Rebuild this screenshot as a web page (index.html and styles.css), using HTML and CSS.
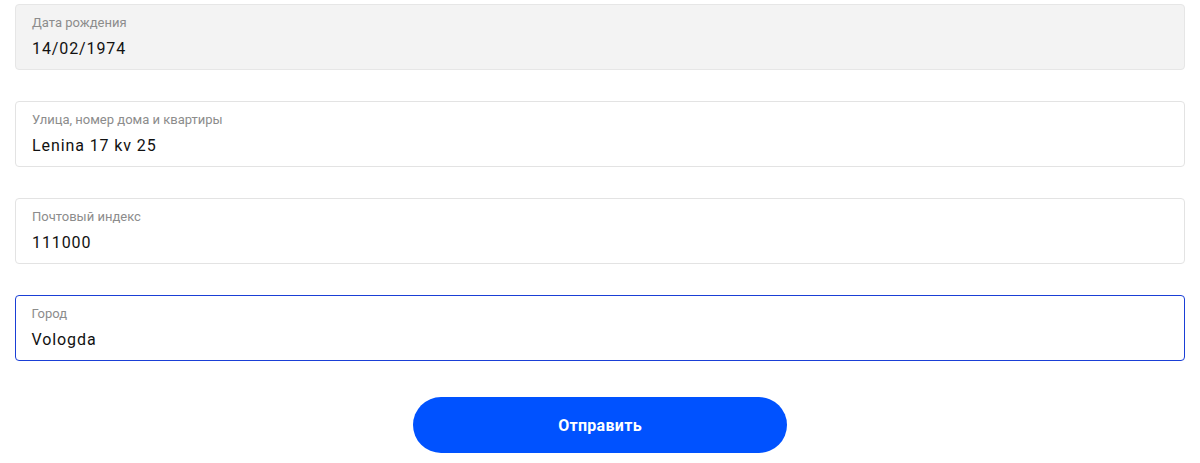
FILE: index.html
```html
<!DOCTYPE html>
<html lang="ru">
<head>
<meta charset="utf-8">
<link rel="stylesheet" href="styles.css">
</head>
<body>
<form class="form">
  <div class="field field-disabled">
    <span class="label">Дата рождения</span>
    <span class="value">14/02/1974</span>
  </div>
  <div class="field">
    <span class="label">Улица, номер дома и квартиры</span>
    <span class="value">Lenina 17 kv 25</span>
  </div>
  <div class="field">
    <span class="label">Почтовый индекс</span>
    <span class="value">111000</span>
  </div>
  <div class="field field-focus">
    <span class="label">Город</span>
    <span class="value">Vologda</span>
  </div>
  <div class="actions">
    <button type="button" class="submit">Отправить</button>
  </div>
</form>
</body>
</html>
```

FILE: styles.css
```css
html, body {
  margin: 0;
  padding: 0;
  background: #ffffff;
}
body {
  font-family: Roboto, "Noto Sans", Arial, sans-serif;
  color: #111;
}
.form {
  display: flex;
  flex-direction: column;
  gap: 31px;
  padding: 4px 15px 0 15px;
}
.field {
  box-sizing: border-box;
  height: 66px;
  border: 1px solid #e3e3e3;
  border-radius: 4px;
  background: #fff;
  padding: 11px 16px 0 16px;
  display: flex;
  flex-direction: column;
}
.field-disabled {
  background: #f3f3f3;
  border-color: #e6e6e6;
}
.field-focus {
  border: 1.5px solid #1a3fd6;
  padding: 10.5px 15.5px 0 15.5px;
}
.label {
  font-size: 13px;
  line-height: 14px;
  color: #8c8c8c;
}
.value {
  font-size: 16px;
  line-height: 20px;
  margin-top: 9px;
  color: #111;
  letter-spacing: 0.9px;
}
.actions {
  display: flex;
  justify-content: center;
  margin-top: 5px;
}
.submit {
  width: 374px;
  height: 56px;
  border: none;
  border-radius: 28px;
  background: #0052ff;
  color: #fff;
  font-family: Roboto, "Noto Sans", Arial, sans-serif;
  font-size: 16px;
  font-weight: 700;
  letter-spacing: 0.3px;
  cursor: pointer;
}
```
